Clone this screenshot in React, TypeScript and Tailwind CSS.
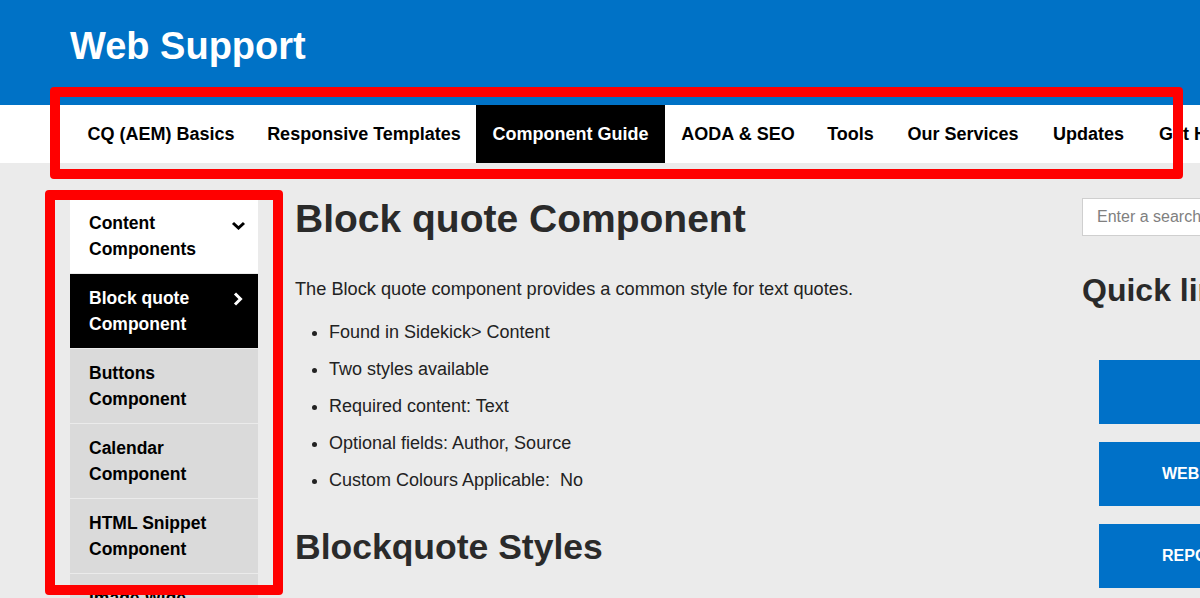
import React from 'react';

const navItems = [
  { label: 'CQ (AEM) Basics', w: 'w-[182px]' },
  { label: 'Responsive Templates', w: 'w-[224px]' },
  { label: 'Component Guide', w: 'w-[189px]', active: true },
  { label: 'AODA & SEO', w: 'w-[146px]' },
  { label: 'Tools', w: 'w-[79px]' },
  { label: 'Our Services', w: 'w-[146px]' },
  { label: 'Updates', w: 'w-[105px]' },
  { label: 'Get Help', w: 'w-[110px]' },
];

const sideItems = [
  { label: ['Content', 'Components'], kind: 'open' },
  { label: ['Block quote', 'Component'], kind: 'active' },
  { label: ['Buttons', 'Component'], kind: 'plain' },
  { label: ['Calendar', 'Component'], kind: 'plain' },
  { label: ['HTML Snippet', 'Component'], kind: 'plain' },
  { label: ['Image Wide', 'Component'], kind: 'plain' },
];

const bullets = [
  'Found in Sidekick> Content',
  'Two styles available',
  'Required content: Text',
  'Optional fields: Author, Source',
  'Custom Colours Applicable:\u00a0 No',
];

function ChevronDown() {
  return (
    <svg width="15" height="9" viewBox="0 0 15 9" className="shrink-0">
      <polyline points="2,2 7.5,7 13,2" fill="none" stroke="currentColor" strokeWidth="3" />
    </svg>
  );
}

function ChevronRight() {
  return (
    <svg width="10" height="14" viewBox="0 0 10 14" className="shrink-0">
      <polyline points="2,1.5 7.5,7 2,12.5" fill="none" stroke="currentColor" strokeWidth="3" />
    </svg>
  );
}

export default function App() {
  return (
    <div className="relative w-[1200px] h-[598px] overflow-hidden bg-[#ebebeb] font-['Liberation_Sans',Arial,sans-serif] text-[#222]">
      {/* header */}
      <header className="h-[105px] bg-[#0072c6] pl-[70px] pt-[27px]">
        <h1 className="text-[38px] leading-[38px] font-bold text-white">Web Support</h1>
      </header>

      {/* top navigation */}
      <nav className="h-[58px] bg-white pl-[70px] flex whitespace-nowrap">
        {navItems.map((item) => (
          <div
            key={item.label}
            className={`${item.w} shrink-0 flex items-center justify-center text-[18px] font-bold ${
              item.active ? 'bg-black text-white' : 'text-black'
            }`}
          >
            {item.label}
          </div>
        ))}
      </nav>

      <div className="flex pt-[36px] pl-[70px]">
        {/* sidebar */}
        <aside className="w-[188px] shrink-0 flex flex-col gap-px">
          {sideItems.map((item) => (
            <div
              key={item.label[0]}
              className={`h-[74px] pl-[19px] pr-[11px] py-[11px] flex justify-between text-[17.5px] leading-[26px] font-bold ${
                item.kind === 'open'
                  ? 'bg-white text-black'
                  : item.kind === 'active'
                    ? 'bg-black text-white'
                    : 'bg-[#dadada] text-black'
              }`}
            >
              <div>
                <div>{item.label[0]}</div>
                <div>{item.label[1]}</div>
              </div>
              {item.kind === 'open' && (
                <div className="pt-[11px] pr-[1px]">
                  <ChevronDown />
                </div>
              )}
              {item.kind === 'active' && (
                <div className="pt-[7px] pr-[4px]">
                  <ChevronRight />
                </div>
              )}
            </div>
          ))}
        </aside>

        {/* main content */}
        <main className="w-[787px] shrink-0 ml-[37px] -mt-[3px]">
          <h2 className="text-[39px] leading-[46px] font-bold text-[#2a2a2a]">Block quote Component</h2>
          <p className="mt-[35px] text-[18.2px] leading-[24px]">
            The Block quote component provides a common style for text quotes.
          </p>
          <ul className="mt-[19px] list-disc pl-[34px] text-[18px] leading-[24px] flex flex-col gap-[13px]">
            {bullets.map((b) => (
              <li key={b}>{b}</li>
            ))}
          </ul>
          <h3 className="mt-[34px] text-[35.5px] leading-[42px] font-bold text-[#2a2a2a]">Blockquote Styles</h3>
        </main>

        {/* right column */}
        <div className="w-[240px] shrink-0 -mt-[1px]">
          <div className="h-[38px] bg-white border border-[#cfcfcf] pl-[14px] flex items-center text-[16px] text-[#808080] whitespace-nowrap">
            Enter a search term
          </div>
          <h2 className="mt-[36px] text-[32px] leading-[36px] font-bold text-[#2a2a2a] whitespace-nowrap">
            Quick links
          </h2>
          <div className="mt-[52px] ml-[17px] flex flex-col gap-[18px]">
            <div className="h-[64px] bg-[#0071c8]" />
            <div className="h-[64px] bg-[#0071c8] pl-[63px] flex items-center text-[16px] font-bold text-white whitespace-nowrap">
              WEB SERVICES
            </div>
            <div className="h-[64px] bg-[#0071c8] pl-[63px] flex items-center text-[16px] font-bold text-white whitespace-nowrap">
              REPORT AN ISSUE
            </div>
          </div>
        </div>
      </div>

      {/* annotation boxes over the screenshot */}
      <div className="absolute left-[50px] top-[87px] w-[1133px] h-[92px] border-[10px] border-[#ff0000] rounded-[4px]" />
      <div className="absolute left-[45px] top-[190px] w-[238px] h-[405px] border-[10px] border-[#ff0000] rounded-[4px]" />
    </div>
  );
}
